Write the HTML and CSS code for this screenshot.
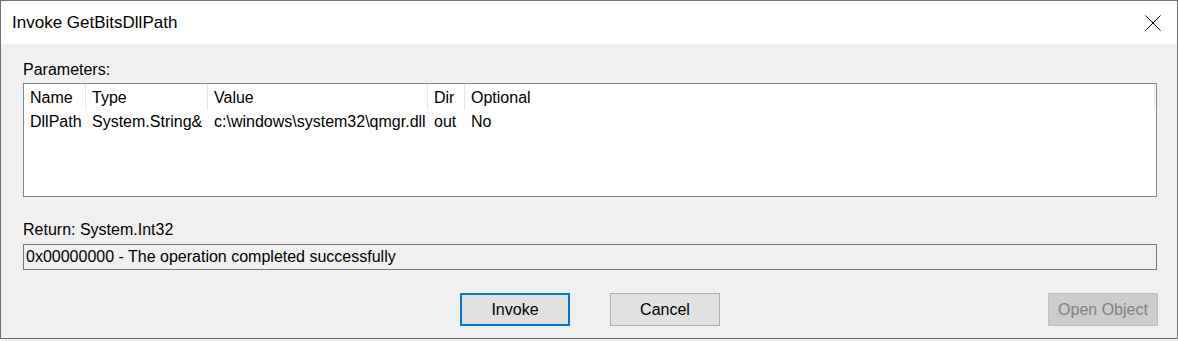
FILE: index.html
```html
<!DOCTYPE html>
<html lang="en">
<head>
<meta charset="UTF-8">
<meta name="viewport" content="width=device-width, initial-scale=1.0">
<title>Invoke GetBitsDllPath</title>
<link rel="stylesheet" href="styles.css">
</head>
<body>
<div class="dialog">
  <div class="titlebar">
    <span class="title">Invoke GetBitsDllPath</span>
    <svg class="close" width="16" height="16" viewBox="0 0 16 16">
      <line x1="0.5" y1="0.5" x2="15.5" y2="15.5" stroke="#000" stroke-width="1"/>
      <line x1="15.5" y1="0.5" x2="0.5" y2="15.5" stroke="#000" stroke-width="1"/>
    </svg>
  </div>

  <div class="content">
    <div class="label params-label">Parameters:</div>
    <div class="listview">
      <div class="lv-row lv-head">
        <div class="hcell">Name</div>
        <div class="hcell">Type</div>
        <div class="hcell">Value</div>
        <div class="hcell">Dir</div>
        <div class="hcell">Optional</div>
      </div>
      <div class="lv-row">
        <div class="cell">DllPath</div>
        <div class="cell">System.String&amp;</div>
        <div class="cell">c:\windows\system32\qmgr.dll</div>
        <div class="cell">out</div>
        <div class="cell">No</div>
      </div>
    </div>

    <div class="label return-label">Return: System.Int32</div>
    <div class="result">0x00000000 - The operation completed successfully</div>

    <div class="buttons">
      <div></div>
      <div class="center-buttons">
        <button class="btn btn-default">Invoke</button>
        <button class="btn">Cancel</button>
      </div>
      <div class="right-buttons">
        <button class="btn btn-disabled" disabled>Open Object</button>
      </div>
    </div>
  </div>
</div>
</body>
</html>
```

FILE: styles.css
```css
body {
  margin: 0;
  padding: 0;
  background-color: #f0f0f0;
  font-family: "Liberation Sans", Arial, sans-serif;
  font-size: 16px;
  color: #000;
}

.dialog {
  box-sizing: border-box;
  width: 1178px;
  height: 339px;
  border: 1px solid #707070;
  background-color: #f0f0f0;
}

.titlebar {
  height: 43px;
  background-color: #fff;
  display: flex;
  align-items: center;
  justify-content: space-between;
  padding-left: 11px;
  padding-right: 16px;
}

.title {
  font-size: 17px;
}

.close {
  display: block;
}

.content {
  padding: 0 20px 0 22px;
}

.label {
  line-height: 18px;
  height: 18px;
}

.params-label {
  padding-top: 17px;
}

.listview {
  box-sizing: border-box;
  margin-top: 4px;
  height: 114px;
  border: 1px solid #828790;
  background-color: #fff;
  overflow: hidden;
}

.lv-row {
  display: grid;
  grid-template-columns: 62px 122px 220px 37px 690px;
}

.hcell,
.cell {
  box-sizing: border-box;
  padding-left: 6px;
  line-height: 24px;
  white-space: nowrap;
}

.hcell {
  height: 26px;
  padding-top: 2px;
  border-right: 1px solid #e5e5e5;
}

.cell {
  height: 24px;
}

.return-label {
  margin-top: 24px;
}

.result {
  box-sizing: border-box;
  margin-top: 5px;
  height: 26px;
  border: 1px solid #7a7a7a;
  padding-left: 2px;
  line-height: 24px;
  background-color: #f0f0f0;
}

.buttons {
  margin-top: 23px;
  display: grid;
  grid-template-columns: 1fr auto 1fr;
}

.center-buttons {
  display: flex;
  gap: 40px;
}

.right-buttons {
  display: flex;
  justify-content: flex-end;
  margin-right: -1px;
}

.btn {
  box-sizing: border-box;
  width: 110px;
  height: 33px;
  padding: 0;
  font-family: "Liberation Sans", Arial, sans-serif;
  font-size: 16px;
  color: #000;
  background-color: #e1e1e1;
  border: 1px solid #adadad;
  border-radius: 0;
}

.btn-default {
  border: 2px solid #0078d7;
}

.btn-disabled {
  background-color: #cccccc;
  border-color: #bfbfbf;
  color: #838383;
}
```
